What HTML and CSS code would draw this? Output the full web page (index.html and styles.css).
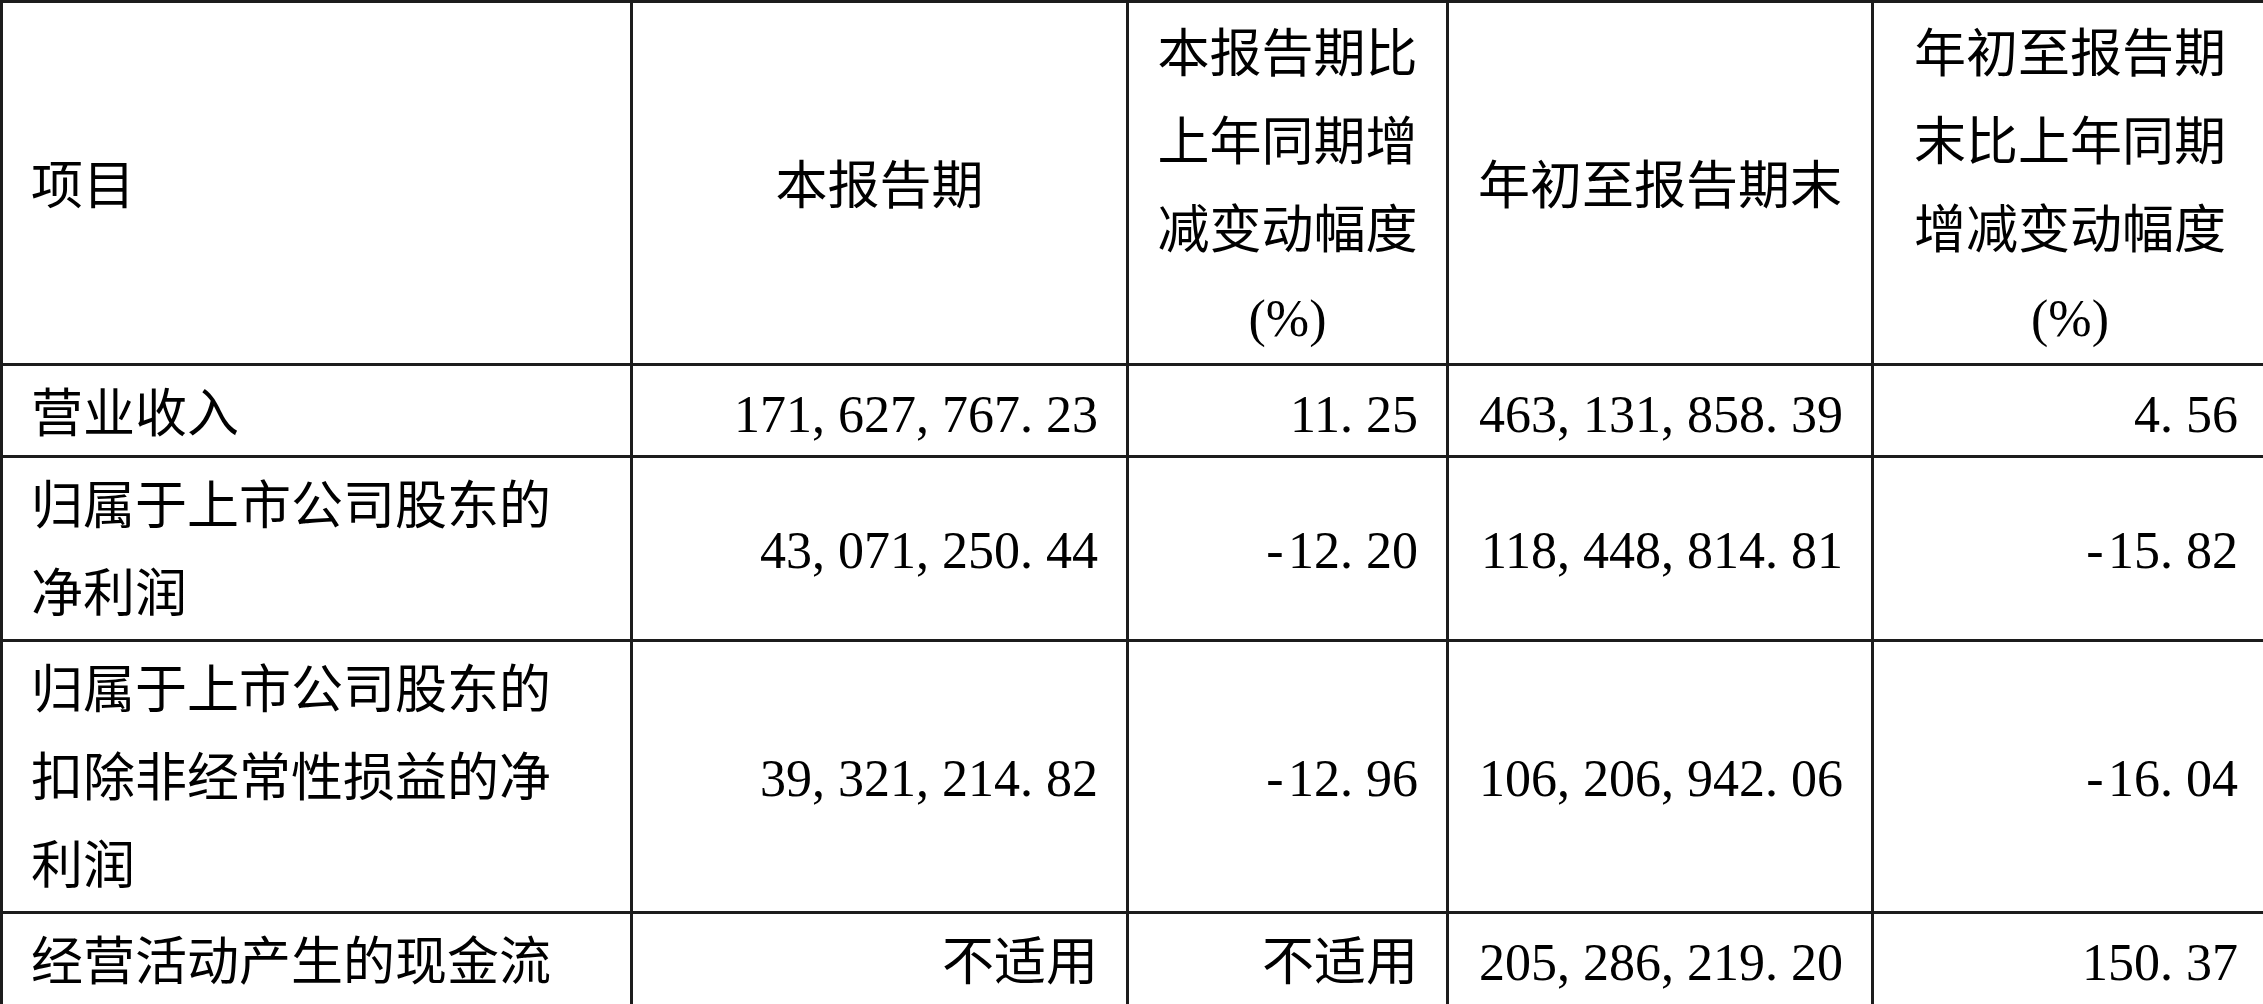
FILE: index.html
```html
<!DOCTYPE html>
<html lang="zh-CN">
<head>
<meta charset="utf-8">
<title>主要会计数据</title>
<link rel="stylesheet" href="styles.css">
</head>
<body>
<table class="fin">
  <colgroup>
    <col class="c1"><col class="c2"><col class="c3"><col class="c4"><col class="c5">
  </colgroup>
  <tr class="r-head">
    <td class="lbl">项目</td>
    <td class="ctr">本报告期</td>
    <td class="ctr">本报告期比<br>上年同期增<br>减变动幅度<br>(%)</td>
    <td class="ctr">年初至报告期末</td>
    <td class="ctr">年初至报告期<br>末比上年同期<br>增减变动幅度<br>(%)</td>
  </tr>
  <tr class="r-a">
    <td class="lbl">营业收入</td>
    <td class="num">171<span class="h">,</span>627<span class="h">,</span>767<span class="h">.</span>23</td>
    <td class="num">11<span class="h">.</span>25</td>
    <td class="num">463<span class="h">,</span>131<span class="h">,</span>858<span class="h">.</span>39</td>
    <td class="num">4<span class="h">.</span>56</td>
  </tr>
  <tr class="r-b">
    <td class="lbl">归属于上市公司股东的<br>净利润</td>
    <td class="num">43<span class="h">,</span>071<span class="h">,</span>250<span class="h">.</span>44</td>
    <td class="num"><span class="h m">-</span>12<span class="h">.</span>20</td>
    <td class="num">118<span class="h">,</span>448<span class="h">,</span>814<span class="h">.</span>81</td>
    <td class="num"><span class="h m">-</span>15<span class="h">.</span>82</td>
  </tr>
  <tr class="r-c">
    <td class="lbl">归属于上市公司股东的<br>扣除非经常性损益的净<br>利润</td>
    <td class="num">39<span class="h">,</span>321<span class="h">,</span>214<span class="h">.</span>82</td>
    <td class="num"><span class="h m">-</span>12<span class="h">.</span>96</td>
    <td class="num">106<span class="h">,</span>206<span class="h">,</span>942<span class="h">.</span>06</td>
    <td class="num"><span class="h m">-</span>16<span class="h">.</span>04</td>
  </tr>
  <tr class="r-d">
    <td class="lbl">经营活动产生的现金流</td>
    <td class="num">不适用</td>
    <td class="num">不适用</td>
    <td class="num">205<span class="h">,</span>286<span class="h">,</span>219<span class="h">.</span>20</td>
    <td class="num">150<span class="h">.</span>37</td>
  </tr>
</table>
</body>
</html>
```

FILE: styles.css
```css
html, body {
  margin: 0;
  padding: 0;
  background: #fff;
}

body {
  width: 2263px;
  height: 1004px;
  overflow: hidden;
}

.fin {
  border-collapse: collapse;
  table-layout: fixed;
  width: 2266px;
  font-family: "Liberation Serif", "Noto Sans CJK SC", serif;
  font-size: 52px;
  line-height: 88px;
  color: #000;
}

.c1 { width: 630px; }
.c2 { width: 496px; }
.c3 { width: 320px; }
.c4 { width: 425px; }
.c5 { width: 395px; }

.fin td {
  border: 3px solid #1c1c1c;
  padding: 0 28px;
  vertical-align: middle;
  white-space: nowrap;
}

.lbl { text-align: left; }
.ctr { text-align: center; }
.num { text-align: right; }

.r-head td { height: 352px; padding-top: 8px; }
.r-a td { height: 81px; line-height: 81px; padding-top: 8px; }
.r-b td { height: 175px; padding-top: 5px; }
.r-c td { height: 262px; padding-top: 5px; }
.r-d td { height: 82px; line-height: 82px; padding-top: 8px; }

.h {
  display: inline-block;
  width: 0.5em;
  text-align: left;
}

.h.m {
  text-align: center;
}
```
